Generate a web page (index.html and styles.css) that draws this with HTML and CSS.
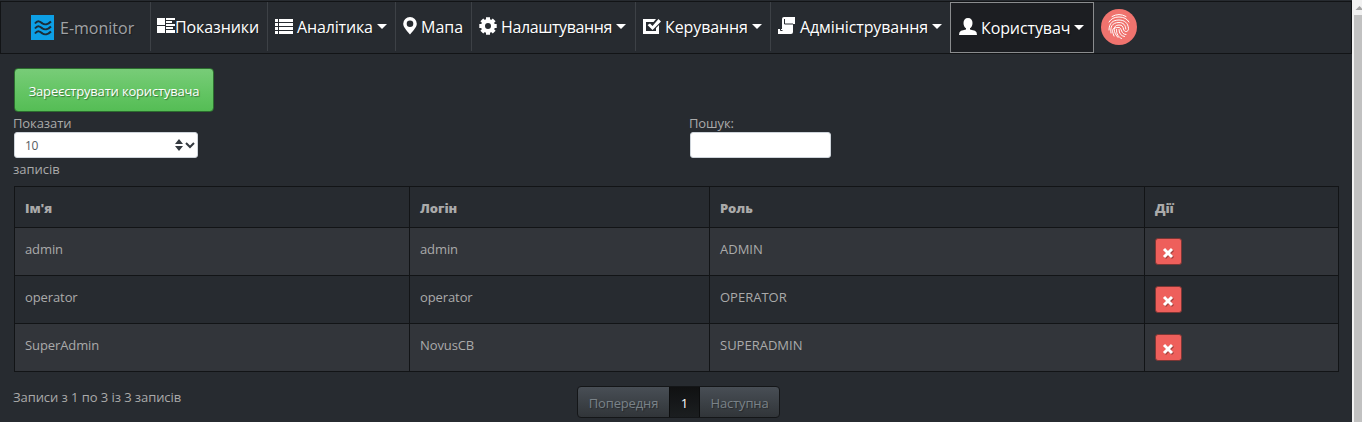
FILE: index.html
```html
<!DOCTYPE html>
<html lang="uk">
<head>
<meta charset="utf-8">
<title>E-monitor</title>
<link rel="stylesheet" href="styles.css">
</head>
<body>
<div class="page">
<nav class="navbar">
  <a class="brand"><svg class="logo" viewBox="0 0 23 25"><path fill="#0d9fe5" d="M0 0h23v25H0z"/><path fill="none" stroke="#1b2c38" stroke-width="2" d="M4 8.500C7 4.500 9.500 7 11.500 8.500S17 9.500 20 6.500M4 13.500C7 9.500 9.500 12 11.500 13.500S17 14.500 20 11.500M4 18.500C7 14.500 9.500 17 11.500 18.500S17 19.500 20 16.500"/></svg><span class="t-brand">E-monitor</span></a>
  <a class="item i1"><svg class="icon" viewBox="0 0 18 18"><path d="M0 1h8v7H0zM0 9h8v7H0zM9 1h9v2H9zM9 4h6v2H9zM9 7h9v2H9zM9 10h7v2H9zM9 13h9v3H9z"/></svg><span class="t1">Показники</span></a>
  <a class="item i2"><svg class="icon" viewBox="0 0 18 18"><path d="M0 2h3v3H0zM4 2h14v3H4zM0 6h3v3H0zM4 6h14v3H4zM0 10h3v3H0zM4 10h14v3H4zM0 14h3v3H0zM4 14h14v3H4z"/></svg><span class="t2">Аналітика</span><i class="caret"></i></a>
  <a class="item i3"><svg class="icon pin" viewBox="0 0 14 18"><path fill-rule="evenodd" d="M7 0a6.800 6.800 0 0 1 6.800 6.800C13.800 10.500 9 15 7 17.500 5 15 .2 10.500.2 6.800A6.800 6.800 0 0 1 7 0zm0 3.500a3.300 3.300 0 1 0 0 6.600 3.300 3.300 0 0 0 0-6.600z"/></svg><span class="t3">Мапа</span></a>
  <a class="item i4"><svg class="icon" viewBox="0 0 18 18"><circle cx="9" cy="9" r="5" fill="none" stroke="#fff" stroke-width="4"/><path fill="none" stroke="#fff" stroke-width="4" d="M9 .3v3M9 14.700v3M.3 9h3M14.700 9h3M2.800 2.800l2.200 2.200M13 13l2.200 2.200M2.800 15.200L5 13M13 5l2.200-2.200"/></svg><span class="t4">Налаштування</span><i class="caret"></i></a>
  <a class="item i5"><svg class="icon" viewBox="0 0 18 18"><path d="M0 2h13l-2.500 3H3v9h10v-3l3-3v9H0z"/><path d="M4.500 8L7 6.500l2.500 2.500L15.500 2 18 4.500 9.500 13z"/></svg><span class="t5">Керування</span><i class="caret"></i></a>
  <a class="item i6"><svg class="icon" viewBox="0 0 18 18"><path d="M4 2q0-2 2-2h11v7h-2v8q0 2-2 2H0v-5h4z"/><path fill="none" stroke="#272b30" d="M6.500 2v5H15M0 11.500h2.500v2h2"/></svg><span class="t6">Адміністрування</span><i class="caret"></i></a>
  <a class="item user"><svg class="icon" viewBox="0 0 18 18"><path d="M9 0c3 0 4.500 2 4.500 5 0 2.500-1 4.300-2.500 5.300v1.200l5 1.300q2 .8 2 4.200H0q0-3.400 2-4.200l5-1.300v-1.200C5.500 9.300 4.500 7.500 4.500 5 4.500 2 6 0 9 0z"/></svg><span class="t7">Користувач</span><i class="caret"></i></a>
  <svg class="finger" viewBox="0 0 36 36"><circle cx="18" cy="18" r="18" fill="#f0736e"/><path fill="none" stroke="#fff" stroke-width="1" stroke-linecap="round" d="M11 7.500Q18 3.500 25 7.500M8 13Q11 8 18 8t10 5M8 21c0-7 4-10 10-10 5.500 0 9 3 9.500 8.500 0 4-4.500 4-5 .5-.5-2.500-1.500-4-4.500-4-7 0-5.500 8-1 12.500M10 24c-1-6 1-10.500 8-10.500 4.500 0 6.500 2.500 6.800 6.500M13 27c-3-7-1.500-8.500 5-8.500 3 0 1.500 7 7 7M18 20.500c0 4 2 6.500 5.500 7M15.500 20.500c0 4.500 1.500 7.500 5 9"/></svg>
</nav>
<main class="content">
  <button class="register"><span class="t-reg">Зареєструвати користувача</span></button>
  <div class="controls">
    <div class="length"><span class="t-show">Показати</span>
      <div class="select"><span>10</span><svg viewBox="0 0 22 12"><path fill="#343a40" d="M0 5l4-5 4 5zM0 7h8l-4 5z"/><path fill="none" stroke="#343a40" stroke-width="2" d="M11 4l4 4 4-4"/></svg></div>
      <span class="t-rec">записів</span></div>
    <div class="search"><span class="t-search">Пошук:</span><input class="field" type="text"></div>
  </div>
  <table class="users">
    <colgroup><col class="c1"><col class="c2"><col class="c3"><col class="c4"></colgroup>
    <thead><tr><th>Ім'я</th><th>Логін</th><th>Роль</th><th>Дії</th></tr></thead>
    <tbody>
      <tr><td>admin</td><td>admin</td><td class="role">ADMIN</td><td><a class="del"><svg viewBox="0 0 12 12"><path d="M2 2l8 8M10 2l-8 8"/></svg></a></td></tr>
      <tr><td>operator</td><td>operator</td><td class="role">OPERATOR</td><td><a class="del"><svg viewBox="0 0 12 12"><path d="M2 2l8 8M10 2l-8 8"/></svg></a></td></tr>
      <tr><td>SuperAdmin</td><td>NovusCB</td><td class="role">SUPERADMIN</td><td><a class="del"><svg viewBox="0 0 12 12"><path d="M2 2l8 8M10 2l-8 8"/></svg></a></td></tr>
    </tbody>
  </table>
  <div class="footer"><span class="info">Записи з 1 по 3 із 3 записів</span>
    <div class="pager"><a class="prev">Попередня</a><a class="current">1</a><a class="next">Наступна</a></div></div>
</main>
</div>
<aside class="scrollbar"><svg viewBox="0 0 8 15"><path fill="#a3a3a3" d="M1.500 10l4-4 4 4z"/></svg><div class="thumb"></div></aside>
</body>
</html>
```
FILE: styles.css
```css
* { box-sizing: border-box; }
body { margin: 0; height: 422px; overflow: hidden; display: flex; background: #272b30; color: #aaa; font: 13px/21px "Open Sans", "Noto Sans", sans-serif; }
.page { width: 1352px; height: 422px; overflow: hidden; }
.scrollbar { width: 10px; height: 422px; background: #f1f1f1; display: flex; flex-direction: column; padding-left: 2px; }
.scrollbar svg { width: 8px; height: 15px; }
.thumb { flex: 1; background: #c1c1c1; }
.navbar { height: 53px; margin-top: 1px; display: flex; border: 1px solid #121416; background: #272b30; font-size: 16px; line-height: 24px; white-space: nowrap; text-shadow: 1px 1px 1px rgba(0,0,0,.3); }
.brand { width: 149px; padding-left: 30px; display: flex; align-items: center; gap: 6px; color: #a0a2a5; }
.logo { width: 23px; height: 25px; }
.item { height: 49px; color: #fff; border-left: 1px solid #3d4146; display: flex; align-items: center; padding-left: 7px; flex: none; }
.icon { width: 18px; height: 18px; fill: #fff; margin: 0 4px 1px 0; flex: none; }
.pin { width: 14px; margin-right: 4px; }
.caret { border: 5px solid transparent; border-top-color: #fff; border-bottom: 0; margin-left: 4px; }
.i1 { width: 117px; padding-left: 6px; }
.i1 .icon { margin-right: 0; }
.i2 { width: 128px; }
.i3 { width: 76px; }
.i4 { width: 164px; }
.i5 { width: 135px; }
.i6 { width: 180px; }
.t1, .t5, .t6, .t7 { letter-spacing: -.1px; }
.t2 { letter-spacing: -.15px; }
.t4 { letter-spacing: -.4px; }
.user { width: 144px; height: 51px; border: 1px solid #8a8c8e; background: #1c1e22; padding-left: 8px; }
.user .icon { margin-bottom: 2px; }
.finger { width: 36px; height: 36px; margin: 7px 0 0 7px; }
.content { padding: 14px 13px 0; }
.register { display: block; width: 200px; height: 44px; margin-left: 1px; border: 1px solid #2b6d2e; border-radius: 4px; background: linear-gradient(#78cc78, #62c462 60%, #55bd55); color: #fff; font: inherit; letter-spacing: -.18px; padding: 2px 0 0; text-shadow: 1px 1px 1px rgba(0,0,0,.4); white-space: nowrap; }
.controls { display: flex; height: 74px; }
.length, .search { width: 676px; display: flex; flex-direction: column; align-items: flex-start; }
.length { flex: none; }
.search { width: 650px; }
.t-show, .t-search { letter-spacing: -.1px; }
.length > span, .search > span { height: 20px; line-height: 23px; }
.select { width: 184px; margin-left: 1px; height: 26px; border-radius: 3px; border: 1px solid #ced4da; background: #fff; color: #555b61; font-size: 12px; letter-spacing: -.4px; padding: 1px 0 0 10px; display: flex; align-items: center; justify-content: space-between; }
.select svg { width: 22px; height: 12px; margin-bottom: 2px; }
.field { width: 141px; height: 26px; margin-left: 1px; border: 1px solid #ced4da; border-radius: 3px; background: #fff; padding: 2px 7px; }
.users { margin-left: 1px; width: 1325px; table-layout: fixed; border-collapse: separate; border-spacing: 0; border-right: 1px solid #121416; border-bottom: 1px solid #121416; }
.c1 { width: 395px; }
.c2 { width: 300px; }
.c3 { width: 435px; }
.users th, .users td { height: 48px; padding: 11px 10px 0; text-align: left; vertical-align: top; border-top: 1px solid #121416; border-left: 1px solid #121416; }
.users th { height: 41px; font-weight: 800; letter-spacing: -.1px; }
.users td { letter-spacing: -.1px; }
.users td.role { letter-spacing: 0; }
.users tbody tr:nth-child(odd) { background: #32353a; }
.del { display: flex; align-items: center; justify-content: center; width: 27px; height: 27px; margin-top: -1px; border: 1px solid #7d3634; border-radius: 3px; background: #ee5f5b; padding: 3px 1px 0 0; }
.del svg { width: 12px; height: 12px; flex: none; fill: none; stroke: #fff; stroke-width: 3; filter: drop-shadow(1px 1px 0 rgba(0,0,0,.3)); }
.footer { display: flex; padding-top: 14px; }
.info { width: 564px; line-height: 22px; letter-spacing: -.07px; }
.pager { display: flex; height: 32px; border: 1px solid #141618; border-radius: 4px; background: linear-gradient(#484e55, #3a3f44 60%, #313539); color: #7a8288; line-height: 33px; text-align: center; letter-spacing: -.15px; text-shadow: 1px 1px 1px rgba(0,0,0,.3); overflow: hidden; white-space: nowrap; }
.prev { width: 91px; }
.current { width: 31px; background: linear-gradient(#101112, #1b1e20); border: solid #0c0d0e; border-width: 0 1px; color: #fff; }
.next { width: 79px; }
```
